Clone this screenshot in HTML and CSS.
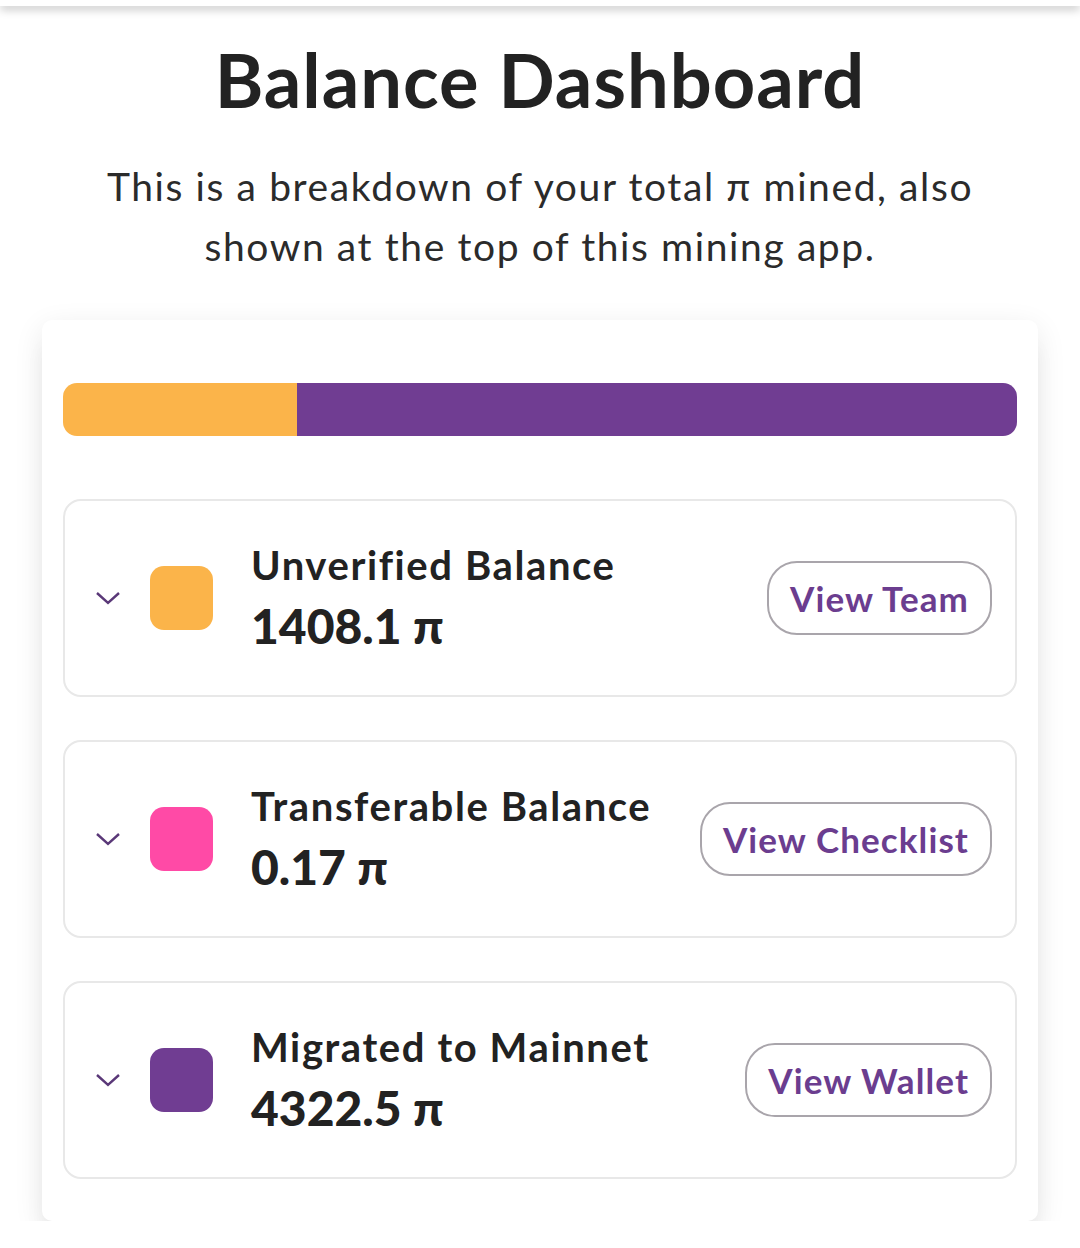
FILE: index.html
```html
<!DOCTYPE html>
<html lang="en">
<head>
  <meta charset="UTF-8" />
  <meta name="viewport" content="width=device-width, initial-scale=1.0" />
  <title>Balance Dashboard</title>
  <link rel="stylesheet" href="styles.css">
</head>
<body>
  <div class="sombra-top"></div>
  <main class="pagina">
    <h1>Balance Dashboard</h1>
    <p class="intro">This is a breakdown of your total π mined, also shown at the top of this mining app.</p>

    <div class="tarjeta">
      <div class="barra">
        <div class="tramo naranja" style="width: 24.5%"></div>
        <div class="tramo morado" style="width: 75.5%"></div>
      </div>

      <div class="fila">
        <svg class="flecha" viewBox="0 0 26 16"><path d="M2 3 L13 13 L24 3" /></svg>
        <span class="cuadro naranja"></span>
        <div class="datos">
          <div class="titulo">Unverified Balance</div>
          <div class="monto">1408.1 π</div>
        </div>
        <button class="boton">View Team</button>
      </div>

      <div class="fila">
        <svg class="flecha" viewBox="0 0 26 16"><path d="M2 3 L13 13 L24 3" /></svg>
        <span class="cuadro rosa"></span>
        <div class="datos">
          <div class="titulo">Transferable Balance</div>
          <div class="monto">0.17 π</div>
        </div>
        <button class="boton">View Checklist</button>
      </div>

      <div class="fila">
        <svg class="flecha" viewBox="0 0 26 16"><path d="M2 3 L13 13 L24 3" /></svg>
        <span class="cuadro morado"></span>
        <div class="datos">
          <div class="titulo">Migrated to Mainnet</div>
          <div class="monto">4322.5 π</div>
        </div>
        <button class="boton">View Wallet</button>
      </div>
    </div>
  </main>
</body>
</html>
```

FILE: styles.css
```css
* {
  box-sizing: border-box;
  margin: 0;
  padding: 0;
  font-family: 'Lato', 'Noto Sans', sans-serif;
}

body {
  background-color: #ffffff;
  color: #222222;
  overflow: hidden;
}

.sombra-top {
  height: 6px;
  background: #ffffff;
  box-shadow: 0 3px 10px rgba(0, 0, 0, 0.28);
  position: relative;
}

.pagina {
  padding: 32px 42px 0;
}

h1 {
  text-align: center;
  font-size: 74px;
  font-weight: 700;
  letter-spacing: 1px;
  color: #222;
  line-height: 84px;
}

.intro {
  text-align: center;
  font-size: 39px;
  letter-spacing: 1.6px;
  line-height: 60px;
  color: #2b2b2b;
  margin: 34px auto 0;
  max-width: 900px;
}

.tarjeta {
  margin-top: 44px;
  background: #fff;
  border-radius: 10px;
  box-shadow: 0 8px 30px rgba(0, 0, 0, 0.09), 0 26px 20px rgba(0, 0, 0, 0.04);
  padding: 63px 21px 42px;
  display: flex;
  flex-direction: column;
  gap: 43px;
}

.barra {
  display: flex;
  height: 53px;
  border-radius: 14px;
  overflow: hidden;
  margin-bottom: 20px;
}

.naranja { background-color: #fbb44a; }
.morado { background-color: #703d92; }
.rosa { background-color: #ff4aa6; }

.fila {
  display: flex;
  align-items: center;
  height: 198px;
  border: 2px solid #e8e8e8;
  border-radius: 18px;
  padding: 0 23px 0 30px;
}

.flecha {
  width: 26px;
  height: 16px;
  fill: none;
  stroke: #5a3878;
  stroke-width: 2.4;
  margin-right: 29px;
}

.cuadro {
  width: 63px;
  height: 64px;
  border-radius: 14px;
  flex-shrink: 0;
  margin-right: 38px;
}

.datos {
  flex: 1;
}

.titulo {
  font-size: 40px;
  font-weight: 700;
  letter-spacing: 1.6px;
  line-height: 46px;
  color: #222;
}

.monto {
  font-size: 48px;
  font-weight: 900;
  line-height: 56px;
  margin-top: 10px;
  color: #222;
}

.boton {
  background: #fff;
  border: 2px solid #a9a5ab;
  border-radius: 30px;
  height: 74px;
  padding: 0 21px;
  font-size: 35px;
  font-weight: 700;
  color: #6b3d8f;
  letter-spacing: 1.1px;
}
```
